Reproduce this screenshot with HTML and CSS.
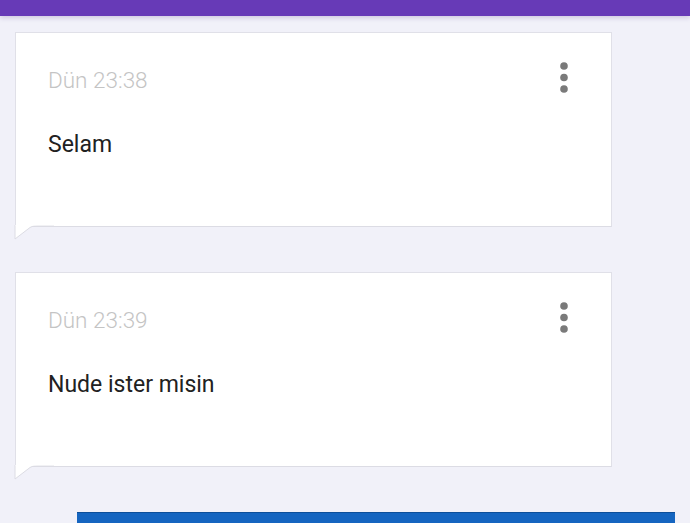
FILE: index.html
```html
<!DOCTYPE html>
<html lang="tr">
<head>
    <meta charset="UTF-8">
    <meta name="viewport" content="width=device-width, initial-scale=1.0">
    <title>Mesajlar</title>
    <link rel="stylesheet" href="styles.css">
</head>
<body>
    <div class="top-bar"></div>
    <div class="messages">
        <div class="message">
            <div class="time">Dün 23:38</div>
            <div class="text">Selam</div>
            <svg class="menu" width="10" height="34" viewBox="0 0 10 34" aria-label="Menü">
                <circle cx="5" cy="5" r="3.8"/>
                <circle cx="5" cy="16.5" r="3.8"/>
                <circle cx="5" cy="28" r="3.8"/>
            </svg>
            <svg class="tail" width="40" height="16" viewBox="0 0 40 16">
                <path d="M1 0 L1 14 L16 2.5 Q19 0.5 23 0.5 L40 0.5" fill="#fff" stroke="#dcdce4" stroke-width="1"/>
                <rect x="1.5" y="0" width="38.5" height="0.6" fill="#fff"/>
            </svg>
        </div>
        <div class="message">
            <div class="time">Dün 23:39</div>
            <div class="text">Nude ister misin</div>
            <svg class="menu" width="10" height="34" viewBox="0 0 10 34" aria-label="Menü">
                <circle cx="5" cy="5" r="3.8"/>
                <circle cx="5" cy="16.5" r="3.8"/>
                <circle cx="5" cy="28" r="3.8"/>
            </svg>
            <svg class="tail" width="40" height="16" viewBox="0 0 40 16">
                <path d="M1 0 L1 14 L16 2.5 Q19 0.5 23 0.5 L40 0.5" fill="#fff" stroke="#dcdce4" stroke-width="1"/>
                <rect x="1.5" y="0" width="38.5" height="0.6" fill="#fff"/>
            </svg>
        </div>
        <div class="compose"></div>
    </div>
</body>
</html>
```

FILE: styles.css
```css
body {
    margin: 0;
    background: #f1f1f9;
    font-family: Roboto, "Noto Sans", sans-serif;
    overflow: hidden;
}
.top-bar {
    height: 16px;
    background: #673ab7;
    box-shadow: 0 2px 5px rgba(60, 30, 120, 0.18);
}
.messages {
    display: flex;
    flex-direction: column;
    padding: 16px 0 0 15px;
}
.message {
    position: relative;
    box-sizing: border-box;
    width: 597px;
    height: 195px;
    margin-bottom: 45px;
    padding: 34px 32px 0 32px;
    background: #fff;
    border: 1px solid #e0e0e8;
    border-bottom-color: #dcdce4;
}
.time {
    font-size: 22.5px;
    font-weight: 300;
    line-height: 26px;
    color: #c4c4c4;
}
.text {
    margin-top: 39px;
    font-size: 23px;
    line-height: 26px;
    color: #212121;
}
.menu {
    position: absolute;
    top: 28px;
    right: 42px;
    fill: #7a7a7a;
}
.tail {
    position: absolute;
    left: -2px;
    top: 100%;
    margin-top: -1px;
}
.compose {
    box-sizing: border-box;
    width: 598px;
    height: 40px;
    margin-left: 62px;
    background: #1565c0;
    border-top: 1px solid #0d4f9a;
}
```
